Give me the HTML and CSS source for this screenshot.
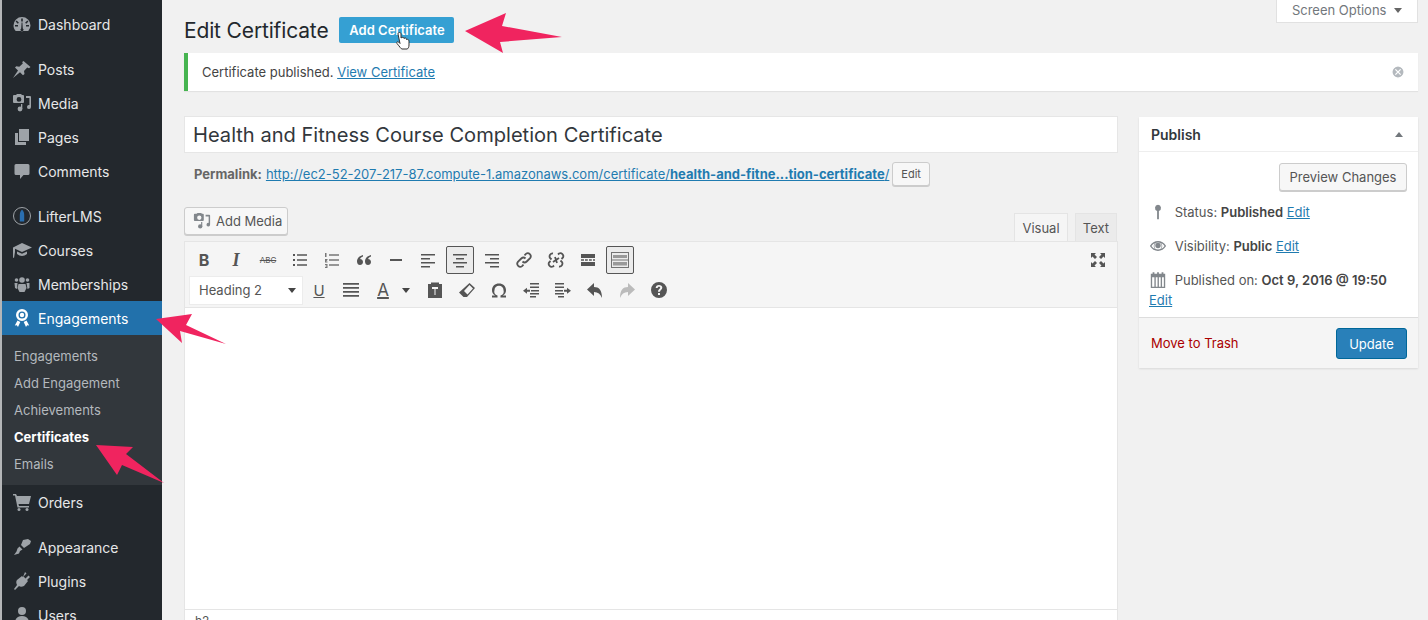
FILE: index.html
```html
<!DOCTYPE html>
<html lang="en">
<head>
    <meta charset="UTF-8">
    <title>Edit Certificate</title>
    <link rel="stylesheet" href="styles.css">
</head>
<body>
    <svg class="sprite" width="0" height="0">
        <symbol id="i-media" viewBox="0 0 20 20">
            <path d="M2 2h2l1-1h4l1 1h1a1 1 0 0 1 1 1v6a1 1 0 0 1-1 1H2a1 1 0 0 1-1-1V3a1 1 0 0 1 1-1zm5 2a2.4 2.4 0 1 0 0 4.800a2.400 2.400 0 0 0 0-4.800z"/>
            <path d="M14 3h4a1 1 0 0 1 1 1v10a2 2 0 1 1-1.600-1.900V5H14z"/>
            <circle cx="8" cy="16" r="2.400"/><path d="M9 11h1.300v5H9z"/>
        </symbol>
    </svg>

    <!-- Admin Menu -->
    <nav class="sidebar">
        <a class="menu-row" href="#"><svg class="menu-icon" viewBox="0 0 20 20"><path fill-rule="evenodd" d="M10 3a8.500 8.500 0 0 0-8.500 8.500c0 2.200.8 4.100 2.200 5.500h12.600a8.500 8.500 0 0 0 2.200-5.500A8.500 8.500 0 0 0 10 3zM9.200 4.500h1.600v3H9.200zM4.700 6.500l2.200 2.200-1.100 1.100-2.200-2.200zm10.600 0 1.100 1.100-2.200 2.200-1.100-1.100zM3 11h3v1.600H3zm11 0h3v1.600h-3zm-4.800 3.500.4-6h.8l.4 6a1.500 1.500 0 1 1-1.600 0z"/></svg><span>Dashboard</span></a>
        <div class="menu-sep"></div>
        <a class="menu-row" href="#"><svg class="menu-icon" viewBox="0 0 20 20"><path d="M11.500 2l7 6-1.500 1.200-1.800-.7-3.200 3.500.5 3-1.500 1.200-3-3L1 19l5-7.500-3-3 1.300-1.300 3 .5 3.500-3.200-.6-1.500z"/></svg><span>Posts</span></a>
        <a class="menu-row" href="#"><svg class="menu-icon"><use href="#i-media"/></svg><span>Media</span></a>
        <a class="menu-row" href="#"><svg class="menu-icon" viewBox="0 0 20 20"><path d="M7 2h10v12H7z"/><path d="M3 6h3v9h8v3H3z"/></svg><span>Pages</span></a>
        <a class="menu-row" href="#"><svg class="menu-icon" viewBox="0 0 20 20"><path d="M4 3h12a1.500 1.500 0 0 1 1.500 1.500v8A1.500 1.500 0 0 1 16 14h-4.500L8 18v-4H4a1.500 1.500 0 0 1-1.500-1.500v-8A1.500 1.500 0 0 1 4 3z"/></svg><span>Comments</span></a>
        <div class="menu-sep"></div>
        <a class="menu-row" href="#"><svg class="menu-icon" viewBox="0 0 20 20"><circle cx="10" cy="10" r="8.500" fill="none" stroke="#9ea3a8" stroke-width="1"/><path class="lifter" d="M10 3.500c1.500 1.500 2.200 3.500 2.200 5.500v6.500H7.800V9c0-2 .7-4 2.200-5.500z"/></svg><span>LifterLMS</span></a>
        <a class="menu-row" href="#"><svg class="menu-icon" viewBox="0 0 20 20"><path d="M10 3l10 4.500-10 4.500-7-3.200V12L2 18l-1-.5V7.500zM5 11.500l5 2.300 5-2.300V14c-3 2.500-7 2.500-10 0z"/></svg><span>Courses</span></a>
        <a class="menu-row" href="#"><svg class="menu-icon" viewBox="0 0 20 20"><circle cx="10" cy="6" r="2.800"/><path d="M6.500 10h7l1 4-2 4h-5l-2-4z"/><circle cx="4.500" cy="6" r="1.800"/><circle cx="15.500" cy="6" r="1.800"/><path d="M2.500 9h3l-.5 6-2-1zM14.500 9h3v5l-2 1z"/></svg><span>Memberships</span></a>
        <a class="menu-row active" href="#"><svg class="menu-icon" viewBox="0 0 20 20"><path fill-rule="evenodd" d="M10 1a6 6 0 1 1 0 12 6 6 0 0 1 0-12zm0 2.500a3.500 3.500 0 1 0 0 7 3.500 3.500 0 0 0 0-7z"/><circle cx="10" cy="7" r="2.200"/><path d="M5.500 12.500l2.800 1.400L6 19l-1.200-1.800-2 .4zM14.500 12.500l-2.800 1.400L14 19l1.200-1.800 2 .4z"/></svg><span>Engagements</span></a>
        <div class="submenu">
            <a href="#">Engagements</a>
            <a href="#">Add Engagement</a>
            <a href="#">Achievements</a>
            <a class="current" href="#">Certificates</a>
            <a href="#">Emails</a>
        </div>
        <a class="menu-row" href="#"><svg class="menu-icon" viewBox="0 0 20 20"><path d="M1 2h3l1 2h14l-2 8H6.500l.5 2h10v1.500H5.500L3 3.500H1z"/><circle cx="7" cy="17.500" r="1.500"/><circle cx="15" cy="17.500" r="1.500"/></svg><span>Orders</span></a>
        <div class="menu-sep"></div>
        <a class="menu-row" href="#"><svg class="menu-icon" viewBox="0 0 20 20"><path d="M11 3l5-1 3 2-1 3-6 4-3-3z"/><path d="M7.500 9.500l3 3-2.500 1.500-1 2.500-5 1.500 2.500-3.500 1-3z"/></svg><span>Appearance</span></a>
        <a class="menu-row" href="#"><svg class="menu-icon" viewBox="0 0 20 20"><path d="M13 1l1.500 1.500-3 3 2 2 3-3L18 6l-3 3 1 1-4 5c-2 1-4 1-5 0l-4 4-1-1 3-4c-1-2-1-4 0-5l5-4 1 1z"/></svg><span>Plugins</span></a>
        <a class="menu-row" href="#"><svg class="menu-icon" viewBox="0 0 20 20"><circle cx="10" cy="6" r="4"/><path d="M3 18c0-5 3-7 7-7s7 2 7 7z"/></svg><span>Users</span></a>
    </nav>

    <!-- Main Content -->
    <main class="content">
        <button class="screen-options">Screen Options <span class="caret"></span></button>

        <div class="page-head">
            <h1>Edit Certificate</h1>
            <a class="add-new" href="#">Add Certificate</a>
        </div>

        <div class="notice">
            <p>Certificate published. <a href="#">View Certificate</a></p>
            <svg class="notice-close" viewBox="0 0 16 16"><circle cx="8" cy="8" r="7"/><path d="M5 5l6 6M11 5l-6 6"/></svg>
        </div>

        <div class="columns">
            <div class="editor-col">
                <div class="title-box">Health and Fitness Course Completion Certificate</div>
                <div class="permalink">
                    <b>Permalink:</b>
                    <a href="#">http://ec2-52-207-217-87.compute-1.amazonaws.com/certificate/<b>health-and-fitne...tion-certificate</b>/</a>
                    <button class="btn-small">Edit</button>
                </div>

                <div class="editor-tools">
                    <button class="btn add-media"><svg class="btn-icon"><use href="#i-media"/></svg>Add Media</button>
                    <div class="tabs">
                        <span class="tab on">Visual</span>
                        <span class="tab">Text</span>
                    </div>
                </div>

                <div class="toolbar">
                    <div class="tool-row">
                        <span class="tool txt-b">B</span>
                        <span class="tool txt-i">I</span>
                        <span class="tool txt-abc">ABC</span>
                        <span class="tool"><svg viewBox="0 0 20 20"><path d="M3 4h2v2H3zM3 9h2v2H3zM3 14h2v2H3zM7 4.300h10v1.400H7zM7 9.300h10v1.400H7zM7 14.300h10v1.400H7z"/></svg></span>
                        <span class="tool"><svg class="thin" viewBox="0 0 20 20"><path d="M3 3h1.500v4H3zM3 9h2.500v1L4 11.500h1.500v1H3zM3 14h2.500v4H3v-1h1.500v-.5H3.500v-1h1V15H3zM7 4.300h10v1.400H7zM7 9.300h10v1.400H7zM7 14.300h10v1.400H7z"/></svg></span>
                        <span class="tool"><svg viewBox="0 0 20 20"><path d="M9 5C5.500 6 3 8 3 11.500 3 14 4.500 15 6 15s3-1 3-3-1.500-3-3-3c.5-1 1.500-2 3-2.500zM17 5c-3.500 1-6 3-6 6.500 0 2.500 1.500 3.500 3 3.500s3-1 3-3-1.500-3-3-3c.5-1 1.500-2 3-2.500z"/></svg></span>
                        <span class="tool"><svg viewBox="0 0 20 20"><path d="M4 9h12v2H4z"/></svg></span>
                        <span class="tool"><svg viewBox="0 0 20 20"><path d="M3 4h14v1.500H3zM3 8h9v1.500H3zM3 12h14v1.500H3zM3 16h9v1.500H3z"/></svg></span>
                        <span class="tool pressed"><svg viewBox="0 0 20 20"><path d="M3 4h14v1.500H3zM6 8h8v1.500H6zM3 12h14v1.500H3zM6 16h8v1.500H6z"/></svg></span>
                        <span class="tool"><svg viewBox="0 0 20 20"><path d="M3 4h14v1.500H3zM8 8h9v1.500H8zM3 12h14v1.500H3zM8 16h9v1.500H8z"/></svg></span>
                        <span class="tool"><svg viewBox="0 0 20 20"><path class="line" d="M8.500 11.500a3 3 0 0 0 4.200 0l3.400-3.400a3 3 0 0 0-4.200-4.200L10.500 5.300M11.500 8.500a3 3 0 0 0-4.200 0l-3.400 3.400a3 3 0 0 0 4.200 4.200l1.400-1.400"/></svg></span>
                        <span class="tool"><svg viewBox="0 0 20 20"><path class="line" d="M12 4.500l1-1a3 3 0 0 1 4 4l-1.500 1.500M8 15.500l-1 1a3 3 0 0 1-4-4L4.500 11M7 3.500a3 3 0 0 0-3 4.500l1.500 1.500M13 16.500a3 3 0 0 0 3-4.500l-1.500-1.500M9 7l2 6M13 8l-6 4"/></svg></span>
                        <span class="tool"><svg viewBox="0 0 20 20"><path d="M3 4h14v4H3zM3 12h14v4H3zM3 9.300h3v1.400H3zM7 9.300h2.800v1.400H7zM11 9.300h2.800v1.400H11zM15 9.300h2v1.400h-2z"/></svg></span>
                        <span class="tool pressed"><svg viewBox="0 0 20 20"><path opacity=".8" fill-rule="evenodd" d="M1 2h18v16H1zm1 1v6.500h16V3zm0 7.500V17h16v-6.500z"/><path opacity=".55" d="M3 5h14v3H3zM3 12h14v3.500H3z"/></svg></span>
                    </div>
                    <div class="tool-row second">
                        <div class="format-select">Heading 2 <span class="caret dark"></span></div>
                        <span class="tool txt-u">U</span>
                        <span class="tool"><svg viewBox="0 0 20 20"><path d="M2 3h16v1.700H2zM2 7h16v1.700H2zM2 11h16v1.700H2zM2 15h16v1.700H2z"/></svg></span>
                        <span class="tool txt-a">A</span>
                        <span class="caret dark color-caret"></span>
                        <span class="tool paste"><svg viewBox="0 0 20 20"><path d="M3 4h3V2.500h8V4h3v14H3zm4 3v2h2.500v6h1V9H13V7z" fill-rule="evenodd"/></svg></span>
                        <span class="tool"><svg viewBox="0 0 20 20"><path fill-rule="evenodd" d="M12.500 3l5.500 5-8 9H6.500L2 12.500zM12.500 5 7 11l3.500 3.500L16 8.500z"/></svg></span>
                        <span class="tool"><svg viewBox="0 0 20 20"><path d="M3 15.500h3.200A6 6 0 0 1 3 10c0-3.800 3-6.500 7-6.500s7 2.700 7 6.500a6 6 0 0 1-3.200 5.500H17V17.500h-5.500v-2A4.500 4.500 0 0 0 14.500 10c0-2.500-2-4.300-4.500-4.300S5.500 7.500 5.500 10a4.500 4.500 0 0 0 3 5.500v2H3z"/></svg></span>
                        <span class="tool"><svg viewBox="0 0 20 20"><path d="M9 3h9v1.500H9zM9 6.500h9V8H9zM10 10h8v1.500h-8zM9 13h9v1.500H9zM9 16h6v1.500H9zM2 10.700l4-3v2h3v2H6v2z"/></svg></span>
                        <span class="tool"><svg viewBox="0 0 20 20"><path d="M2 3h9v1.500H2zM2 6.500h9V8H2zM2 10h8v1.500H2zM2 13h9v1.500H2zM5 16h6v1.500H5zM18 10.700l-4-3v2h-3v2h3v2z"/></svg></span>
                        <span class="tool"><svg viewBox="0 0 20 20"><path d="M9 3v4c5 0 8 3 8 11-1.500-4-4-6-8-6v4L2 9.500z"/></svg></span>
                        <span class="tool faded"><svg viewBox="0 0 20 20"><path d="M11 3v4C6 7 3 10 3 18c1.500-4 4-6 8-6v4l7-6.500z"/></svg></span>
                        <span class="tool"><svg viewBox="0 0 20 20"><path fill-rule="evenodd" d="M10 2a8 8 0 1 1 0 16 8 8 0 0 1 0-16zM9 13v2h2v-2zM10 5C8 5 6.800 6.200 6.700 8h2c0-.8.500-1.200 1.300-1.200s1.200.4 1.200 1c0 1.200-2.200 1.400-2.200 4h2c0-1.800 2.300-2 2.300-4.300C13.300 6 12 5 10 5z"/></svg></span>
                    </div>
                    <svg class="fullscreen" viewBox="0 0 20 20"><path d="M3 3h5L6.500 4.500 9 7 7 9 4.500 6.500 3 8zM17 3v5l-1.500-1.500L13 9l-2-2 2.500-2.500L12 3zM3 17v-5l1.500 1.500L7 11l2 2-2.500 2.500L8 17zM17 17h-5l1.500-1.500L11 13l2-2 2.500 2.500L17 12z"/></svg>
                </div>

                <div class="editor-body"></div>
                <div class="statusbar">h2</div>
            </div>

            <!-- Publish Box -->
            <aside class="publish">
                <div class="publish-head">
                    <h2>Publish</h2>
                    <span class="caret up"></span>
                </div>
                <div class="publish-body">
                    <div class="preview-row"><button class="btn">Preview Changes</button></div>
                    <div class="pub-row">
                        <svg class="pub-icon" viewBox="0 0 20 20"><path d="M10 2a3.500 3.500 0 0 1 1 6.800V18H9V8.800A3.500 3.500 0 0 1 10 2z"/></svg>
                        Status: <b>Published</b> <a href="#">Edit</a>
                    </div>
                    <div class="pub-row">
                        <svg class="pub-icon" viewBox="0 0 20 20"><path fill-rule="evenodd" d="M1 10c2-3.500 5.500-5.500 9-5.500s7 2 9 5.500c-2 3.500-5.500 5.500-9 5.500S3 13.500 1 10zm9-4a4 4 0 1 0 0 8 4 4 0 0 0 0-8zM2.700 10c1 1.500 2.300 2.600 3.800 3.300a5.500 5.500 0 0 1 0-6.600C5 7.400 3.700 8.500 2.700 10zm10.800-3.300a5.500 5.500 0 0 1 0 6.600c1.500-.7 2.800-1.800 3.800-3.300-1-1.500-2.300-2.600-3.800-3.300z"/><circle cx="10" cy="9.500" r="3"/></svg>
                        Visibility: <b>Public</b> <a href="#">Edit</a>
                    </div>
                    <div class="pub-row">
                        <svg class="pub-icon" viewBox="0 0 20 20"><path fill-rule="evenodd" d="M2 3h2V1.500h2V3h3V1.500h2V3h3V1.500h2V3h2v16H2zm1.500 4v10.500H6V7zm4 0v10.500h2V7zm3.500 0v10.500h2V7zm3.500 0v10.500h2V7z"/></svg>
                        Published on: <b>Oct 9, 2016 @ 19:50</b> <a href="#">Edit</a>
                    </div>
                </div>
                <div class="publish-foot">
                    <a class="trash" href="#">Move to Trash</a>
                    <button class="btn-update">Update</button>
                </div>
            </aside>
        </div>
    </main>

    <!-- Annotation arrows and the mouse pointer -->
    <svg class="overlay" viewBox="0 0 1428 620">
        <path class="arrow" d="M465 31 506 13 502 26 562 37 500 42 503 53z"/>
        <path class="arrow" d="M156 319 192 314 186 325 226 344 180 331 182 343z"/>
        <path class="arrow" d="M96 445 133 447 126 454 164 483 122 465 117 475z"/>
        <path class="hand" d="M398 34c0-2 3-2 3 0v4c1-1 3-1 3 .5 1-1 2.500-.5 2.500 1 1-.5 2.500 0 2.500 1.500v4c0 2-1 4-2 4h-5c-1 0-2-2-5-5.500-1-1.500 1-2.500 2-1l1 1z"/>
    </svg>
</body>
</html>
```

FILE: styles.css
```css
/* Global Styles */
html, body {
    margin: 0;
    height: 620px;
    overflow: hidden;
}
body {
    display: flex;
    position: relative;
    background-color: #f1f1f1;
    color: #444;
    font-family: Inter, "Liberation Sans", sans-serif;
    font-size: 13px;
}
a {
    color: #1f7bb0;
}
button {
    font-family: inherit;
}
.sprite {
    position: absolute;
}
.caret {
    display: inline-block;
    width: 0;
    height: 0;
    border-left: 4px solid transparent;
    border-right: 4px solid transparent;
    border-top: 5px solid #72777c;
}
.caret.dark {
    border-top-color: #444;
}
.caret.up {
    border-top: 0;
    border-bottom: 5px solid #72777c;
}

/* Admin Menu */
.sidebar {
    flex: none;
    width: 162px;
    height: 620px;
    padding-top: 7px;
    box-sizing: border-box;
    border-left: 2px solid #b4b6b8;
    background-color: #23282d;
}
.menu-row {
    display: flex;
    align-items: center;
    height: 34px;
    padding-left: 10px;
    color: #e6e7e8;
    font-size: 14px;
    text-decoration: none;
}
.menu-sep {
    height: 11px;
}
.menu-icon {
    flex: none;
    width: 20px;
    height: 20px;
    margin-right: 6px;
    fill: #9ea3a8;
}
.lifter {
    fill: #2a6fb0;
}
.menu-row.active {
    background-color: #2271ab;
    color: #fff;
}
.menu-row.active .menu-icon {
    fill: #fff;
}
.submenu {
    padding: 8px 0 7px;
    background-color: #32373c;
}
.submenu a {
    display: block;
    height: 27px;
    padding-left: 12px;
    color: #b4b9be;
    font-size: 13px;
    line-height: 27px;
    text-decoration: none;
}
.submenu a.current {
    color: #fff;
    font-weight: 700;
}

/* Page Head */
.content {
    flex: 1;
    position: relative;
    padding: 0 10px 0 22px;
    min-width: 0;
}
.screen-options {
    position: absolute;
    top: -2px;
    right: 10px;
    width: 142px;
    height: 25px;
    padding: 0;
    border: 1px solid #e1e1e1;
    border-top: 0;
    background: #fff;
    color: #72777c;
    font-size: 13px;
}
.screen-options .caret {
    margin-left: 4px;
    vertical-align: 2px;
    border-top-color: #666;
}
.page-head {
    display: flex;
    align-items: center;
    gap: 11px;
    height: 53px;
    padding-top: 7px;
    box-sizing: border-box;
}
.page-head h1 {
    margin: 0;
    color: #23282d;
    font-size: 21px;
    font-weight: 400;
    letter-spacing: -0.15px;
}
.add-new {
    width: 115px;
    height: 26px;
    border-radius: 2px;
    background-color: #35a0d3;
    color: #fff;
    font-size: 13px;
    font-weight: 600;
    line-height: 26px;
    text-align: center;
    text-decoration: none;
}
.notice {
    display: flex;
    align-items: center;
    justify-content: space-between;
    height: 38px;
    padding: 0 13px 0 14px;
    border-left: 4px solid #46b450;
    background-color: #fff;
    box-shadow: 0 1px 1px rgba(0, 0, 0, 0.06);
}
.notice p {
    margin: 0;
    color: #444;
    font-size: 13px;
}
.notice-close {
    width: 14px;
    height: 14px;
    fill: #b4b9be;
    stroke: #fff;
    stroke-width: 1.500;
}

/* Editor Column */
.columns {
    display: flex;
    gap: 21px;
    margin-top: 25px;
}
.editor-col {
    flex: none;
    width: 934px;
}
.title-box {
    height: 37px;
    padding-left: 8px;
    border: 1px solid #e6e6e6;
    box-sizing: border-box;
    background-color: #fff;
    color: #32373c;
    font-size: 20.1px;
    line-height: 36px;
}
.permalink {
    display: flex;
    align-items: center;
    gap: 4px;
    height: 24px;
    margin-top: 9px;
    padding-left: 10px;
    color: #666;
    font-size: 13px;
    white-space: pre;
}
.btn-small {
    height: 24px;
    margin-left: -1px;
    padding: 0 8px;
    border: 1px solid #ccc;
    border-radius: 3px;
    background: #f7f7f7;
    box-shadow: 0 1px 0 #ccc;
    color: #555;
    font-size: 11px;
}
.btn {
    height: 28px;
    padding: 0 10px;
    border: 1px solid #ccc;
    border-radius: 3px;
    background: #f7f7f7;
    box-shadow: 0 1px 0 #ccc;
    color: #555;
    font-size: 13px;
    white-space: nowrap;
}
.editor-tools {
    display: flex;
    justify-content: space-between;
    align-items: flex-end;
    height: 44px;
    margin-top: 11px;
}
.add-media {
    display: flex;
    align-items: center;
    width: 104px;
    margin-bottom: 6px;
    padding: 0 8px;
}
.btn-icon {
    flex: none;
    width: 18px;
    height: 18px;
    margin-right: 5px;
    fill: #82878c;
}
.tabs {
    display: flex;
    gap: 7px;
    margin-right: 1px;
}
.tab {
    width: 42px;
    height: 28px;
    border: 1px solid #e4e4e4;
    border-bottom: 0;
    box-sizing: border-box;
    background: #ebebeb;
    color: #555;
    font-size: 13px;
    line-height: 28px;
    text-align: center;
}
.tab.on {
    width: 54px;
    background: #f5f5f5;
}

/* Toolbar */
.toolbar {
    position: relative;
    height: 67px;
    padding: 4px 0 0 5px;
    border: 1px solid #e5e5e5;
    box-sizing: border-box;
    background-color: #f5f5f5;
}
.tool-row {
    display: flex;
    align-items: center;
    gap: 4px;
    height: 28px;
}
.tool-row.second {
    margin-top: 2px;
}
.tool {
    display: flex;
    align-items: center;
    justify-content: center;
    flex: none;
    width: 28px;
    height: 28px;
    box-sizing: border-box;
    color: #555;
}
.tool svg {
    width: 20px;
    height: 20px;
    fill: #555;
}
.tool svg .line {
    fill: none;
    stroke: #555;
    stroke-width: 1.800;
}
.tool svg.thin {
    fill: #777;
}
.tool.pressed {
    border: 1px solid #555;
    border-radius: 2px;
    background: #ebebeb;
}
.tool.faded svg {
    fill: #bbb;
}
.txt-b {
    font-size: 16px;
    font-weight: 700;
}
.txt-i {
    font-family: "Liberation Serif", serif;
    font-size: 18px;
    font-style: italic;
    font-weight: 700;
}
.txt-abc {
    font-size: 8px;
    text-decoration: line-through;
}
.txt-u {
    font-size: 15px;
    text-decoration: underline;
}
.txt-a {
    font-size: 17px;
    text-decoration: underline;
    text-decoration-thickness: 2px;
}
.format-select {
    display: flex;
    align-items: center;
    justify-content: space-between;
    flex: none;
    width: 112px;
    height: 27px;
    margin-right: -1px;
    padding: 0 6px 0 9px;
    box-sizing: border-box;
    background-color: #fff;
    box-shadow: 0 0 0 1px #ececec;
    color: #555;
    font-size: 13px;
}
.color-caret {
    margin-left: 1px;
    margin-right: 7px;
}
.fullscreen {
    position: absolute;
    top: 8px;
    right: 9px;
    width: 20px;
    height: 20px;
    fill: #555;
}
.editor-body {
    height: 301px;
    border-right: 1px solid #e5e5e5;
    border-left: 1px solid #e5e5e5;
    background-color: #fff;
}
.statusbar {
    height: 30px;
    padding: 3px 0 0 10px;
    border: 1px solid #e5e5e5;
    background-color: #fff;
    color: #555;
    font-size: 12px;
}

/* Publish Box */
.publish {
    flex: none;
    width: 279px;
    height: 251px;
    margin-top: 1px;
    background-color: #fff;
    box-shadow: 0 1px 2px rgba(0, 0, 0, 0.1);
}
.publish-head {
    display: flex;
    align-items: center;
    justify-content: space-between;
    height: 35px;
    padding: 0 15px 0 12px;
    border-bottom: 1px solid #eee;
    box-sizing: border-box;
}
.publish-head h2 {
    margin: 0;
    color: #32373c;
    font-size: 14px;
    font-weight: 600;
}
.publish-body {
    height: 165px;
    padding: 11px 11px 0 10px;
    box-sizing: border-box;
}
.preview-row {
    display: flex;
    justify-content: flex-end;
    margin-bottom: 4px;
}
.preview-row .btn {
    width: 128px;
    padding: 0;
}
.pub-row {
    height: 34px;
    padding-top: 7px;
    box-sizing: border-box;
    color: #555;
    font-size: 13px;
    line-height: 20px;
}
.pub-row b {
    color: #444;
    font-weight: 600;
}
.pub-icon {
    width: 18px;
    height: 18px;
    margin-right: 4px;
    vertical-align: -4px;
    fill: #82878c;
}
.publish-foot {
    display: flex;
    align-items: center;
    justify-content: space-between;
    height: 51px;
    padding: 0 11px 0 12px;
    border-top: 1px solid #ddd;
    box-sizing: border-box;
    background-color: #f5f5f5;
}
.trash {
    color: #a00;
    font-size: 13px;
    text-decoration: none;
}
.btn-update {
    width: 71px;
    height: 31px;
    margin-top: 1px;
    border: 1px solid #006799;
    border-radius: 3px;
    background-color: #2980b9;
    color: #fff;
    font-size: 13px;
}

/* Annotations */
.overlay {
    position: absolute;
    top: 0;
    left: 0;
    width: 1428px;
    height: 620px;
    pointer-events: none;
}
.arrow {
    fill: #f0245f;
}
.hand {
    fill: #fff;
    stroke: #333;
    stroke-width: 1;
}
```
